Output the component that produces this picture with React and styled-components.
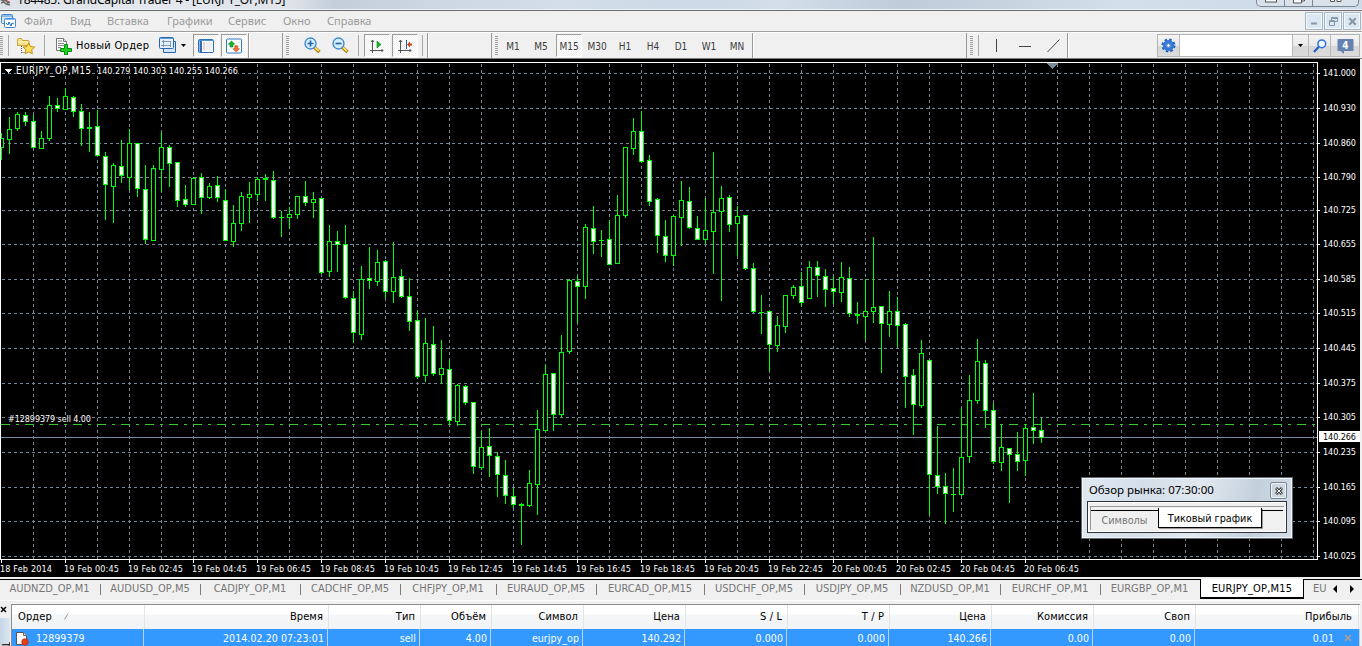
import React from "react";
import styled, { createGlobalStyle, css } from "styled-components";

const Global = createGlobalStyle`
  * { box-sizing: border-box; }
  html, body { margin: 0; padding: 0; overflow: hidden; }
  body { font-family: "DejaVu Sans Condensed", "DejaVu Sans", sans-serif; font-stretch: condensed; color: #000; }
  svg { display: block; }
`;

const Window = styled.div`
  position: relative;
  width: 1362px;
  height: 646px;
  display: flex;
  flex-direction: column;
  overflow: hidden;
  background: #f0f0f0;
`;

/* ---------- title bar ---------- */
const TitleBar = styled.div`
  flex: 0 0 11px;
  display: flex;
  justify-content: space-between;
  align-items: flex-start;
  overflow: hidden;
  border-bottom: 1px solid #6b6b70;
  box-shadow: inset 0 -1px 0 #eef3f8;
  background: linear-gradient(90deg, #dde2e8 0, #e4e8ee 150px, #dfe4ea 290px, #c3ceda 335px, #cbd6e1 420px, #d3deea 560px, #cdd9e6 700px, #d3deea 780px, #bfccd9 900px, #c8d4e0 1010px, #d3dfeb 1120px, #cddae7 1362px);
`;
const TitleText = styled.div`
  display: flex;
  gap: 6px;
  margin-top: -9px;
  font: 12px/18px "Noto Sans", "Open Sans", sans-serif;
  letter-spacing: -0.2px;
  white-space: nowrap;
`;
const WindowButtons = styled.div`
  display: flex;
  width: 103px;
  height: 7px;
  margin-right: 3px;
  border: 1px solid #7d8791;
  border-top: 0;
  border-radius: 0 0 5px 5px;
  background: #d9e2eb;
`;
const WindowButton = styled.div`
  width: ${(p) => p.$w}px;
  border-right: ${(p) => (p.$last ? 0 : "1px solid #7d8791")};
  display: flex;
  justify-content: center;
`;

/* ---------- menu ---------- */
const MenuBar = styled.div`
  flex: 0 0 21px;
  display: flex;
  align-items: center;
  padding: 0 1px;
  border-bottom: 1px solid #a0a0a0;
`;
const MenuItem = styled.span`
  width: ${(p) => p.$w}px;
  font: 11px/18px "Noto Sans", "Open Sans", sans-serif;
  color: #9a9a9a;
  white-space: nowrap;
`;
const MdiButtons = styled.div`
  display: flex;
  gap: 1px;
  margin-left: auto;
`;
const MdiButton = styled.div`
  width: 18px;
  height: 18px;
  border: 1px solid #a3b4c4;
  box-shadow: inset 0 0 0 1px #f4f9fd;
  background: #dbe8f4;
  display: grid;
  place-items: center;
`;

/* ---------- toolbar ---------- */
const Toolbar = styled.div`
  flex: 0 0 27px;
  display: flex;
  align-items: stretch;
  border-top: 1px solid #fff;
  border-bottom: 1px solid #808080;
`;
const ToolGroup = styled.div`
  width: ${(p) => p.$w}px;
  display: flex;
  align-items: center;
  border-right: 1px solid #999;
  box-shadow: 1px 0 0 #fff;
`;
const Spacer = styled.div`
  width: ${(p) => p.$w}px;
  flex: none;
`;
const BlankBand = styled.div`
  width: ${(p) => p.$w}px;
  border-right: ${(p) => (p.$line ? "1px solid #999" : 0)};
`;
const Grip = styled.div`
  width: 3px;
  height: 19px;
  margin: 0 ${(p) => p.$r}px 0 ${(p) => p.$l}px;
  background: repeating-linear-gradient(#a0a0a0 0 1px, #f0f0f0 1px 2px);
`;
const Rule = styled.div`
  width: 1px;
  height: 21px;
  flex: none;
  background: #a8a8a8;
`;
const ToolButton = styled.div`
  width: ${(p) => p.$w || 26}px;
  height: 23px;
  flex: none;
  display: flex;
  align-items: center;
  justify-content: center;
  border: 1px solid transparent;
  ${(p) =>
    p.$on &&
    css`
      border-color: #9c9c9c #fff #fff #9c9c9c;
      background: repeating-conic-gradient(#fff 0 25%, #f0f0f0 0 50%) 0 0 / 2px 2px;
    `}
`;
const OrderText = styled.span`
  width: 83px;
  padding-left: 4px;
  font: 11px/16px "DejaVu Sans Condensed", sans-serif;
  letter-spacing: 0.3px;
  white-space: nowrap;
`;
const Period = styled(ToolButton)`
  width: 28px;
  padding-top: 1px;
  font-size: 10px;
  color: #3c3c3c;
  ${(p) => p.$on && "width: 26px; margin: 0 1px;"}
`;
const SearchBox = styled.div`
  display: flex;
  width: 203px;
  height: 23px;
  align-self: center;
  margin-left: auto;
  margin-right: 2px;
  border: 1px solid #b4b4b4;
`;
const SearchCell = styled.div`
  width: ${(p) => p.$w}px;
  display: grid;
  place-items: center;
  border-right: 1px solid #b9b9b9;
  background: ${(p) => (p.$field ? "#fff" : "linear-gradient(#f4f4f4, #e9e9e9 50%, #d6d6d6 52%, #dcdcdc)")};
  &:last-child { border-right: 0; }
`;

/* ---------- chart ---------- */
const ChartPane = styled.div`
  flex: 0 0 518px;
  width: 1360px;
  background: #000;
`;

/* ---------- chart tabs ---------- */
const TabBar = styled.div`
  flex: 0 0 23px;
  display: flex;
  margin-top: 1px;
  border-bottom: 1px solid #fff;
  background: linear-gradient(#f0f0f0 1px, #000 1px 2px, #f0f0f0 2px);
`;
const ChartTab = styled.div`
  width: ${(p) => p.$w}px;
  flex: none;
  height: 20px;
  margin-top: 1px;
  padding-right: ${(p) => (p.$on ? 0 : 2)}px;
  text-align: center;
  font-size: 11px;
  line-height: 19px;
  letter-spacing: ${(p) => p.$ls || 0}px;
  color: #757575;
  white-space: nowrap;
  overflow: hidden;
  background: ${(p) => (p.$sep ? "linear-gradient(#7b7b7b, #7b7b7b) 100% 5px / 1px 11px no-repeat" : "none")};
  ${(p) =>
    p.$on &&
    css`
      color: #000;
      background: #fff;
      border: 2px solid #000;
      border-top: 0;
      border-left-width: 1px;
      border-right-width: 1px;
    `}
`;
const TabArrows = styled.div`
  display: flex;
  gap: 13px;
  align-items: center;
  padding-left: 6px;
`;

/* ---------- orders ---------- */
const Terminal = styled.div`
  flex: 1;
  display: flex;
  padding-top: 3px;
`;
const Side = styled.div`
  width: 11px;
  display: flex;
  flex-direction: column;
`;
const SideClose = styled.div`
  height: 14px;
  padding-top: 2px;
`;
const SideTitle = styled.div`
  flex: 1;
  width: 10px;
  overflow: hidden;
  padding-top: 24px;
  font-size: 10px;
  line-height: 10px;
  writing-mode: vertical-rl;
  background: linear-gradient(90deg, #c6d6e5, #dbe7f2);
`;
const Orders = styled.div`
  width: 1349px;
  border-top: 1px solid #8c8c8c;
  border-left: 1px solid #8c8c8c;
  background: #fff;
`;
const Row = styled.div`
  display: flex;
  height: ${(p) => (p.$head ? 24 : 20)}px;
  background: ${(p) => (p.$head ? "linear-gradient(#fff 0 9px, #f5f6f8 10px, #f2f3f5)" : "#3399ff")};
  color: ${(p) => (p.$head ? "#000" : "#fff")};
`;
const Cell = styled.div`
  width: ${(p) => p.$w}px;
  flex: none;
  display: flex;
  align-items: center;
  justify-content: ${(p) => (p.$left ? "flex-start" : "flex-end")};
  padding: 0 ${(p) => p.$pr || 0}px 2px ${(p) => p.$pl || 0}px;
  border-right: 1px solid ${(p) => (p.$head ? "#e2e4e7" : "#b8d4f2")};
  font-size: ${(p) => (p.$head ? 11 : 10.5)}px;
  letter-spacing: ${(p) => (p.$head ? 0.1 : 0.08)}px;
  white-space: nowrap;
`;

/* ---------- market watch ---------- */
const Watch = styled.div`
  position: absolute;
  left: 1081px;
  top: 477px;
  width: 212px;
  height: 62px;
  padding: 4px 5px 5px;
  border: 1px solid #62686f;
  box-shadow: inset 0 0 0 1px #f2f6fa;
  background: linear-gradient(100deg, #dfe8f1, #d4dee8 30%, #e1e8ef 55%, #c3d0dc 80%, #d5dee7);
`;
const WatchHead = styled.div`
  display: flex;
  justify-content: space-between;
  height: 19px;
  padding-left: 2px;
  font: 11.5px/16px "Noto Sans", "Open Sans", sans-serif;
  letter-spacing: 0;
  white-space: nowrap;
`;
const WatchClose = styled.div`
  width: 17px;
  height: 17px;
  border: 1px solid #7b858f;
  border-radius: 2px;
  box-shadow: inset 0 0 0 1px #eef3f7;
  display: grid;
  place-items: center;
`;
const WatchBody = styled.div`
  height: 32px;
  border: 1px solid #30343a;
  box-shadow: inset 0 0 0 1px #fff;
  background: #f0f0f0;
  padding: 4px 2px 2px;
`;
const WatchTabs = styled.div`
  display: flex;
  height: 24px;
  padding-top: 1px;
  padding-right: 1px;
  border-top: 1px solid #9a9a9a;
  border-left: 1px solid #9a9a9a;
`;
const WatchTab = styled.div`
  width: ${(p) => p.$w}px;
  height: ${(p) => (p.$on ? 20 : 18)}px;
  margin-top: ${(p) => (p.$on ? 0 : 2)}px;
  text-align: center;
  font-size: 10.8px;
  line-height: ${(p) => (p.$on ? 22 : 19)}px;
  letter-spacing: ${(p) => p.$ls || 0}px;
  white-space: nowrap;
  color: ${(p) => (p.$on ? "#000" : "#777")};
  background: ${(p) => (p.$on ? "#fff" : "none")};
  border: solid #000;
  border-width: ${(p) => (p.$on ? "0 1px 1px" : "1px 0 0")};
  box-shadow: ${(p) => (p.$on ? "1px 1px 0 #999" : "none")};
`;

/* high, body top, body bottom, low, filled */
const CANDLES = [
  [133,138,148,160,0],[117,129,140,154,0],[112,114,129,131,0],[112,115,122,126,1],[115,121,148,148,1],[131,138,149,149,0],[96,105,139,141,0],[98,105,109,112,1],
  [88,96,110,110,0],[96,97,112,117,1],[104,111,129,146,1],[112,127,129,152,1],[110,126,156,156,1],[152,156,185,220,1],[163,165,187,223,0],[140,166,176,183,1],
  [129,143,178,190,0],[143,143,189,197,1],[165,189,240,244,1],[165,168,241,241,0],[132,147,170,192,0],[145,147,164,187,1],[162,162,201,207,1],[185,199,205,207,1],
  [177,178,205,205,0],[173,177,198,214,1],[183,186,198,199,0],[176,185,198,202,1],[189,200,241,241,1],[205,223,242,247,0],[192,196,224,231,0],[182,194,198,223,0],
  [177,179,195,201,0],[174,178,180,201,1],[171,180,218,219,1],[211,217,218,237,0],[207,214,218,229,0],[196,196,215,219,0],[181,196,203,206,1],[192,199,203,218,0],
  [198,198,273,274,1],[225,241,272,277,0],[231,241,245,272,1],[225,244,298,299,1],[291,298,333,343,1],[266,279,335,340,0],[247,278,281,289,1],[250,262,282,286,0],
  [260,261,292,298,1],[242,277,292,303,0],[269,276,297,298,1],[278,296,322,331,1],[310,320,377,379,1],[318,343,376,382,0],[326,344,374,376,1],[340,368,375,383,0],
  [360,369,421,424,1],[384,385,422,426,0],[385,386,403,405,1],[402,402,467,474,1],[431,447,468,470,0],[428,446,456,477,1],[452,456,475,497,1],[460,475,496,504,1],
  [488,496,505,508,1],[503,504,506,545,1],[470,483,506,507,0],[410,429,485,515,0],[365,374,431,431,0],[373,373,415,431,1],[335,352,415,417,0],[279,280,352,354,0],
  [276,281,287,323,1],[224,227,287,299,0],[206,228,242,254,1],[230,240,241,257,0],[220,239,265,265,1],[195,215,264,264,0],[147,147,216,218,0],[118,131,149,155,0],
  [111,131,162,163,1],[155,160,202,206,1],[198,199,236,253,1],[220,236,256,262,1],[215,216,256,266,0],[181,200,218,246,0],[187,201,228,229,1],[216,228,240,240,1],
  [198,230,240,244,0],[152,212,232,274,0],[186,198,212,301,0],[195,197,225,232,1],[206,216,224,256,0],[215,215,269,270,1],[263,268,312,313,1],[295,312,313,334,0],
  [311,311,345,371,1],[316,325,346,352,0],[295,295,327,333,0],[285,287,296,299,0],[272,286,303,306,1],[261,267,299,299,0],[261,267,276,297,1],[269,276,290,307,1],
  [276,288,292,304,1],[262,277,293,302,0],[267,278,314,317,1],[302,314,316,324,1],[279,311,317,340,0],[237,307,312,323,0],[306,306,324,373,1],[291,311,325,337,0],
  [297,311,326,347,1],[323,324,377,408,1],[369,375,405,435,1],[340,353,406,408,0],[360,360,475,515,1],[426,475,487,494,1],[473,486,494,524,1],[468,494,495,512,0],
  [408,457,495,496,0],[375,400,457,463,0],[339,361,401,404,0],[360,363,411,428,1],[403,410,462,464,1],[425,447,463,471,0],[448,448,455,503,1],[432,454,462,471,1],
  [424,428,461,476,0],[393,427,431,444,1],[418,430,438,443,1],
];

const PRICES = [
  [73,"141.000"],[108,"140.930"],[143,"140.860"],[177,"140.790"],[210,"140.725"],[244,"140.655"],[279,"140.585"],[313,"140.515"],
  [348,"140.445"],[383,"140.375"],[417,"140.305"],[452,"140.235"],[487,"140.165"],[521,"140.095"],[556,"140.025"],
];
const TIMES = [
  "19 Feb 00:45","19 Feb 02:45","19 Feb 04:45","19 Feb 06:45","19 Feb 08:45","19 Feb 10:45","19 Feb 12:45","19 Feb 14:45",
  "19 Feb 16:45","19 Feb 18:45","19 Feb 20:45","19 Feb 22:45","20 Feb 00:45","20 Feb 02:45","20 Feb 04:45","20 Feb 06:45",
];

const Candle = ({ x, d: [hi, top, bot, lo, filled] }) => (
  <g>
    <rect x={x} y={hi} width="1" height={lo - hi} fill="#0f0" />
    <rect x={x - 2} y={top} width="5" height={bot - top} fill="#0f0" />
    {bot - top > 2 && <rect x={x - 1} y={top + 1} width="3" height={bot - top - 2} fill={filled ? "#fff" : "#000"} />}
  </g>
);

const Chart = () => (
  <svg width="1360" height="518" viewBox="0 59 1360 518" shapeRendering="crispEdges" fontFamily="DejaVu Sans Condensed, DejaVu Sans, sans-serif" fontStretch="condensed" fontSize="9" fill="#fff">
    <g stroke="#778899" strokeDasharray="3 3">
      {PRICES.map(([y]) => <path key={y} d={`M2 ${y + 0.5}H1317`} />)}
      {Array.from({ length: 41 }, (_, i) => <path key={i} d={`M${33.5 + i * 32} 64V559`} />)}
    </g>
    <path d="M1 437.5H1317" stroke="#778899" />
    <path d="M1 424.5H1317" stroke="#32cd32" strokeDasharray="9 6 3 6" />
    {CANDLES.map((d, i) => <Candle key={i} x={1 + i * 8} d={d} />)}
    <path d="M0 62.5H1317.5V559.5H0M0.5 62V560" stroke="#fff" fill="none" />
    <path d="M1047 63H1058L1052.5 69Z" fill="#778899" />
    <path d="M4 69H12L8 73Z" />
    <text x="16" y="74" fontSize="9.600" textLength="75" stroke="#000" strokeWidth="2" paintOrder="stroke">EURJPY_OP,M15</text>
    <text x="97" y="74" textLength="141" stroke="#000" strokeWidth="2" paintOrder="stroke">140.279 140.303 140.255 140.266</text>
    <text x="8" y="422" textLength="83" stroke="#000" strokeWidth="1" paintOrder="stroke">#12899379 sell 4.00</text>
    {PRICES.map(([y, label]) => (
      <g key={label}>
        <rect x="1318" y={y} width="2" height="1" />
        <text x="1323" y={y + 3} textLength="33">{label}</text>
      </g>
    ))}
    <rect x="1319" y="431" width="41" height="11" />
    <text x="1323" y="440" textLength="33" fill="#000">140.266</text>
    <text x="0" y="572" textLength="52">18 Feb 2014</text>
    <rect x="1" y="560" width="1" height="3" />
    {TIMES.map((t, i) => (
      <g key={t}>
        <rect x={65 + i * 64} y="560" width="1" height="3" />
        <text x={64 + i * 64} y="572" textLength="55">{t}</text>
      </g>
    ))}
  </svg>
);

/* ---------- icons ---------- */
const AppIcon = () => (
  <svg width="11" height="18" viewBox="0 0 11 18"><path d="M0 8l3 2 2-1 3 3 2-1M1 12l3-1 2 2 4 1" stroke="#6b6b6b" strokeWidth="1.5" fill="none" /><path d="M6 9l3 2" stroke="#c33" /></svg>
);
const ChartsIcon = () => (
  <svg width="15" height="16" viewBox="0 0 15 16" fill="none">
    <rect x="0.5" y="1.5" width="11" height="9" rx="1" fill="#d6e8fa" stroke="#4288d0" />
    <path d="M1 3h10" stroke="#4288d0" />
    <rect x="3.5" y="5.5" width="11" height="9" rx="1" fill="#fff" stroke="#4288d0" />
    <path d="M4 6.5h10" stroke="#8ebcec" /><path d="M5 10l2 2 1-3 2 4 1-3 2 1" stroke="#2070c8" />
  </svg>
);
const FolderStar = () => (
  <svg width="20" height="18" viewBox="0 0 20 18">
    <path d="M1.5 2.5q0-1 1-1h3l1 2h5.500q1 0 1 1v4h-11.500Z" fill="#f8e08a" stroke="#c9a23a" />
    <path d="M2 5h10" stroke="#fff6cd" /><path d="M5.500 9v7M5.500 15.500h3" stroke="#555" strokeDasharray="1 1" />
    <path d="M12.800 6l1.800 3.600 4 .5-3 2.700.8 4-3.600-2-3.600 2 .8-4-3-2.700 4-.5Z" fill="#ffdf55" stroke="#c39217" />
  </svg>
);
const NewOrder = () => (
  <svg width="17" height="18" viewBox="0 0 17 18">
    <path d="M1.500 1.500h7l3 3v9h-10Z" fill="#fff" stroke="#777" /><path d="M8.500 1.500v3h3" fill="#ddd" stroke="#777" />
    <path d="M3 4h4M3 6.500h6M3 8.500h6M3 10.500h3" stroke="#888" />
    <path d="M9.500 7.500h3v4h4v3h-4v3.500h-3v-3.500h-4v-3h4Z" fill="#1fd21f" stroke="#0a8a12" />
  </svg>
);
const Windows = () => (
  <svg width="18" height="17" viewBox="0 0 18 17" fill="none">
    <path d="M15 4.500h1.500v11h-12V12" fill="none" stroke="#2a66a8" />
    <path d="M5 12h10V5h1v10H5Z" fill="#cfe4fa" />
    <rect x="0.500" y="0.500" width="14" height="11" rx="1" fill="#e4f1fd" stroke="#2a66a8" />
    <path d="M1 1.500h13" stroke="#5c9ad8" /><path d="M4.500 3v7M2 8.500h10M11.500 5v5M3 4.500h9" stroke="#6a87a8" strokeWidth=".8" />
  </svg>
);
const Caret = () => <svg width="5" height="3" viewBox="0 0 5 3"><path d="M0 0h5L2.500 3Z" /></svg>;
const NavIcon = () => (
  <svg width="16" height="14" viewBox="0 0 16 14">
    <rect x=".5" y=".5" width="15" height="13" rx="1" fill="#fff" stroke="#2a6eb8" /><path d="M1 1.500h14" stroke="#4f94da" />
    <path d="M1.500 2h2.500v11h-2.500Z" fill="#2d6db5" /><path d="M5.500 4h1M5.500 6h1M5.500 8h1M5.500 10h1" stroke="#c33" /><path d="M8 4h6M8 6h6M8 8h6M8 10h6" stroke="#dde" />
  </svg>
);
const TradeIcon = () => (
  <svg width="16" height="16" viewBox="0 0 16 16">
    <rect x=".5" y="1" width="15" height="14" rx="1" fill="#fff" stroke="#2f7cc4" /><path d="M2 5h12M2 8h12M2 11h12" stroke="#e3e6ee" />
    <path d="M5.500 3l3.200 3.200H6.900v2.800H4.100V6.200H2.300Z" fill="#18b428" stroke="#0c7c18" strokeWidth=".6" />
    <path d="M10.200 14l-3.200-3.200h1.800V7.800h2.800v3H13.400Z" fill="#f47838" stroke="#c03c10" strokeWidth=".6" />
  </svg>
);
const ZoomIcon = ({ plus }) => (
  <svg width="17" height="17" viewBox="0 0 17 17">
    <path d="M10 10l5.500 5" stroke="#a57b14" strokeWidth="3.500" /><path d="M10.500 10l4.500 4.200" stroke="#ffe060" strokeWidth="1.800" />
    <circle cx="6.500" cy="6.500" r="5.500" fill="#d5edff" stroke="#3a86cc" strokeWidth="1.300" />
    <path d={plus ? "M3.500 6.500h6M6.500 3.500v6" : "M3.500 6.500h6"} stroke="#2568a8" strokeWidth="1.700" />
  </svg>
);
const ScrollIcon = () => (
  <svg width="14" height="14" viewBox="0 0 14 14"><path d="M2.500 1v13M0 11.500h13M1 3l1.500-2L4 3M11.500 10l1.500 1.500-1.500 1.500" fill="none" stroke="#555" /><path d="M7 2l4 3.500-4 3.500Z" fill="#18b42c" stroke="#0b7c1c" strokeWidth=".6" /></svg>
);
const ShiftIcon = () => (
  <svg width="15" height="14" viewBox="0 0 15 14"><path d="M2.500 1v13M0 11.500h13M1 3l1.500-2L4 3M11.500 10l1.500 1.500-1.500 1.500" fill="none" stroke="#555" /><path d="M8.500 1v9" stroke="#1268b0" /><path d="M9 5.500l3-3v2h2v2h-2v2Z" fill="#c8440c" /></svg>
);
const LineIcon = ({ d, w }) => <svg width={w} height="14" viewBox={`0 0 ${w} 14`}><path d={d} stroke="#444" fill="none" /></svg>;
const Gear = () => (
  <svg width="15" height="15" viewBox="0 0 15 15">
    <circle cx="7.500" cy="7.500" r="5.700" fill="none" stroke="#1f5fc0" strokeWidth="2.600" strokeDasharray="2.400 2.080" />
    <circle cx="7.500" cy="7.500" r="3.900" fill="#eaf2fc" stroke="#3478d6" strokeWidth="3.200" /><circle cx="7.500" cy="7.500" r="1.800" fill="#fff" stroke="#174fa8" strokeWidth=".8" />
  </svg>
);
const Lens = () => (
  <svg width="14" height="14" viewBox="0 0 14 14"><path d="M1 13l5-5.500" stroke="#2460c4" strokeWidth="2.200" /><circle cx="8.800" cy="4.800" r="3.900" fill="#eef5ff" stroke="#3070d8" strokeWidth="1.500" /></svg>
);
const Chat = () => (
  <svg width="17" height="16" viewBox="0 0 17 16">
    <path d="M1.500 1h14a1 1 0 011 1v10a1 1 0 01-1 1H7v3L3.500 13h-2a1 1 0 01-1-1V2a1 1 0 011-1Z" fill="#6482b0" />
    <text x="8.500" y="11" textAnchor="middle" fontSize="10" fontWeight="bold" fill="#fff">4</text>
  </svg>
);
const Cross = ({ s = 7, c = "#000", w = 1.5 }) => <svg width={s} height={s} viewBox="0 0 7 7"><path d="M1 1l5 5M6 1L1 6" stroke={c} strokeWidth={w} /></svg>;
const OrderIcon = () => (
  <svg width="14" height="15" viewBox="0 0 14 15"><path d="M1.500 1.500h7l3 3v9h-10Z" fill="#fff" stroke="#555" /><path d="M8.500 1.500v3h3" fill="#ddd" stroke="#666" /><circle cx="10" cy="11" r="3.300" fill="#e84018" stroke="#a42208" strokeWidth=".6" /></svg>
);

const MENU = [["Файл", 46], ["Вид", 37], ["Вставка", 60], ["Графики", 61], ["Сервис", 55], ["Окно", 44], ["Справка", 60]];
const PERIODS = ["M1", "M5", "M15", "M30", "H1", "H4", "D1", "W1", "MN"];
const TABS = [
  ["AUDNZD_OP,M1", 101], ["AUDUSD_OP,M5", 100], ["CADJPY_OP,M1", 100], ["CADCHF_OP,M5", 100], ["CHFJPY_OP,M1", 96], ["EURAUD_OP,M5", 100],
  ["EURCAD_OP,M15", 108], ["USDCHF_OP,M5", 100], ["USDJPY_OP,M5", 96], ["NZDUSD_OP,M1", 100], ["EURCHF_OP,M1", 100], ["EURGBP_OP,M1", 99],
];
const COLUMNS = [
  ["Время", "2014.02.20 07:23:01", 184], ["Тип", "sell", 92], ["Объём", "4.00", 71], ["Символ", "eurjpy_op", 92], ["Цена", "140.292", 102],
  ["S / L", "0.000", 102], ["T / P", "0.000", 102], ["Цена", "140.266", 102], ["Комиссия", "0.00", 102], ["Своп", "0.00", 102],
];

export default function App() {
  return (
    <Window>
      <Global />
      <TitleBar>
        <TitleText><AppIcon /><span>184485: GrandCapital Trader 4 - [EURJPY_OP,M15]</span></TitleText>
        <WindowButtons>
          <WindowButton $w={28}><svg width="12" height="3"><rect x=".5" y="-2" width="11" height="4" fill="#fff" stroke="#555" /></svg></WindowButton>
          <WindowButton $w={28}><svg width="12" height="4"><path d="M.5 0v3h8V0M9 1h2.500V0" fill="#fff" stroke="#555" /></svg></WindowButton>
          <WindowButton $w={45} $last><svg width="12" height="3"><path d="M.5 0v1.500h4V0M7 0v1.500h4V0" fill="#fff" stroke="#555" /></svg></WindowButton>
        </WindowButtons>
      </TitleBar>

      <MenuBar>
        <ChartsIcon />
        <Spacer $w={8} />
        {MENU.map(([t, w]) => <MenuItem key={t} $w={w}>{t}</MenuItem>)}
        <MdiButtons>
          <MdiButton><svg width="8" height="8"><path d="M1 6.500h6" stroke="#8596a6" strokeWidth="2" /></svg></MdiButton>
          <MdiButton><svg width="9" height="9" fill="none" stroke="#8596a6"><path d="M2.500 3V.5h6v4H6M2.500 1.500h6M.5 3.500h5v5h-5ZM.5 4.500h5" /></svg></MdiButton>
          <MdiButton><Cross s={9} c="#8596a6" w={1.6} /></MdiButton>
        </MdiButtons>
      </MenuBar>

      <Toolbar>
        <ToolGroup $w={249}>
          <Grip $l={0} $r={5} /><Rule />
          <Spacer $w={7} /><FolderStar /><Spacer $w={8} /><Rule />
          <Spacer $w={10} /><NewOrder /><OrderText>Новый Ордер</OrderText>
          <Spacer $w={4} /><Windows /><Spacer $w={4} /><Caret /><Spacer $w={7} />
          <ToolButton $on><NavIcon /></ToolButton><Spacer $w={2} />
          <ToolButton $on><TradeIcon /></ToolButton>
        </ToolGroup>
        <BlankBand $w={34} $line />
        <ToolGroup $w={145}>
          <Grip $l={3} $r={15} /><ZoomIcon plus /><Spacer $w={11} /><ZoomIcon />
          <Spacer $w={9} /><Rule /><Spacer $w={5} />
          <ToolButton $on><ScrollIcon /></ToolButton><Spacer $w={2} />
          <ToolButton $on><ShiftIcon /></ToolButton><Spacer $w={4} /><Rule />
        </ToolGroup>
        <BlankBand $w={64} $line />
        <ToolGroup $w={261}>
          <Grip $l={3} $r={1} />
          {PERIODS.map((p) => <Period key={p} $on={p === "M15"}>{p}</Period>)}
        </ToolGroup>
        <BlankBand $w={214} $line />
        <ToolGroup $w={101}>
          <Grip $l={3} $r={5} /><Rule />
          <Spacer $w={17} /><LineIcon w={1} d="M.5 0v13" />
          <Spacer $w={22} /><LineIcon w={12} d="M0 7.500h12" />
          <Spacer $w={16} /><LineIcon w={13} d="M.5 13L12.500.5" />
        </ToolGroup>
        <SearchBox>
          <SearchCell $w={22}><Gear /></SearchCell>
          <SearchCell $w={113} $field />
          <SearchCell $w={16}><Caret /></SearchCell>
          <SearchCell $w={22}><Lens /></SearchCell>
          <SearchCell $w={28}><Chat /></SearchCell>
        </SearchBox>
      </Toolbar>

      <ChartPane><Chart /></ChartPane>

      <TabBar>
        {TABS.map(([t, w], i) => <ChartTab key={t} $w={w} $sep={i < TABS.length - 1}>{t}</ChartTab>)}
        <ChartTab $w={104} $on $ls={0.2}>EURJPY_OP,M15</ChartTab>
        <Spacer $w={9} />
        <ChartTab $w={14}>EU</ChartTab>
        <TabArrows>
          <svg width="4" height="8"><path d="M4 0v8L0 4Z" /></svg>
          <svg width="4" height="8"><path d="M0 0v8l4-4Z" /></svg>
        </TabArrows>
      </TabBar>

      <Terminal>
        <Side>
          <SideClose><Cross /></SideClose>
          <SideTitle>Терминал</SideTitle>
        </Side>
        <Orders>
          <Row $head>
            <Cell $head $left $w={133} $pl={6}>
              Ордер
              <Spacer $w={12} />
              <svg width="6" height="7"><path d="M.5 6.500L4 .5" stroke="#999" /></svg>
            </Cell>
            {COLUMNS.map(([h, , w], i) => <Cell key={i} $head $w={w} $pr={5}>{h}</Cell>)}
            <Cell $head $w={163} $pr={6}>Прибыль</Cell>
          </Row>
          <Row>
            <Cell $left $w={132} $pl={3}><OrderIcon /><Spacer $w={7} />12899379</Cell>
            {COLUMNS.map(([, v, w], i) => <Cell key={i} $w={w} $pr={3}>{v}</Cell>)}
            <Cell $w={165} $pr={7}>0.01<Spacer $w={10} /><Cross s={8} c="#a89c98" w={1.6} /></Cell>
          </Row>
        </Orders>
      </Terminal>

      <Watch>
        <WatchHead>
          <span>Обзор рынка: 07:30:00</span>
          <WatchClose><svg width="8" height="8" viewBox="0 0 8 8"><path d="M1 1l6 6M7 1L1 7" stroke="#444" strokeWidth="3" /><path d="M1.500 1.500l5 5M6.500 1.500l-5 5" stroke="#fff" /></svg></WatchClose>
        </WatchHead>
        <WatchBody>
          <WatchTabs>
            <WatchTab $w={67}>Символы</WatchTab>
            <WatchTab $w={104} $on>Тиковый график</WatchTab>
            <WatchTab $w={21} />
          </WatchTabs>
        </WatchBody>
      </Watch>
    </Window>
  );
}
